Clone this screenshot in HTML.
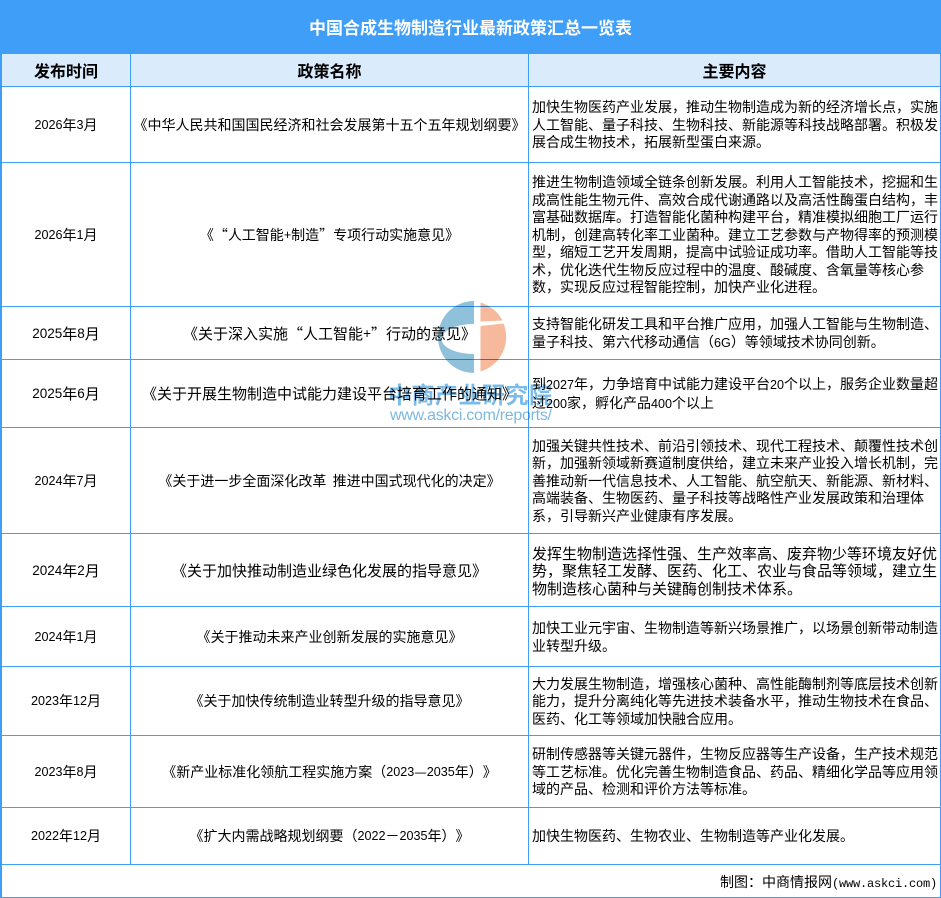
<!DOCTYPE html>
<html lang="zh-CN"><head><meta charset="utf-8"><title>中国合成生物制造行业最新政策汇总一览表</title>
<style>
html,body{margin:0;padding:0;background:#fff}
#p{position:relative;width:941px;height:898px;overflow:hidden;background:#fff;font-family:"WenQuanYi Zen Hei","Noto Sans CJK SC",sans-serif;font-size:14px;color:#000}
.t{position:absolute;left:0;top:0;width:941px;height:54px;background:#3f9ef7;color:#fff;font-size:17px;font-weight:bold;line-height:54px;text-align:center}
.hb{position:absolute;left:1px;top:54px;width:939px;height:32px;background:#daebfc}
.h{position:absolute;top:54px;height:32px;line-height:33px;font-size:16px;font-weight:bold;text-align:center}
.lh,.lv{position:absolute;background:#3f9ef7}
.lh{left:0;width:941px;height:1px}
.lv{width:1px}
.c{position:absolute;display:flex;align-items:center;justify-content:center;white-space:nowrap}
.d{left:2px;width:128px}
.n{left:131px;width:397px}
.x{left:532px;width:405px;display:flex;flex-direction:column;justify-content:center;align-items:stretch;line-height:17.5px;transform:translateY(1px)}
.x span.j{display:block;text-align:justify;text-align-last:justify;white-space:nowrap}
.x span.l{display:block;white-space:nowrap}
.b{font-size:15px}
i{font-style:normal;font-family:"Liberation Sans",sans-serif;font-size:.9em}
b{font-weight:normal;font-family:"Noto Sans CJK SC",sans-serif}
u{text-decoration:none;font-family:"Liberation Mono",monospace;font-size:12px;letter-spacing:-.2px}
.f{position:absolute;right:4px;top:873px;line-height:18px;white-space:nowrap}
svg{position:absolute;left:0;top:0;pointer-events:none;mix-blend-mode:multiply}
</style></head><body><div id="p">
<div class="t">中国合成生物制造行业最新政策汇总一览表</div>
<div class="hb"></div>
<div class="h" style="left:2px;width:128px">发布时间</div>
<div class="h" style="left:131px;width:397px">政策名称</div>
<div class="h" style="left:529px;width:411px">主要内容</div>

<div class="lv" style="left:0;top:54px;height:844px;width:2px"></div>
<div class="lv" style="left:130px;top:54px;height:810px"></div>
<div class="lv" style="left:528px;top:54px;height:810px"></div>
<div class="lv" style="left:940px;top:54px;height:844px"></div>
<div class="lh" style="top:86px"></div>
<div class="lh" style="top:162px"></div>
<div class="lh" style="top:306px"></div>
<div class="lh" style="top:359px"></div>
<div class="lh" style="top:427px"></div>
<div class="lh" style="top:533px"></div>
<div class="lh" style="top:606px"></div>
<div class="lh" style="top:666px"></div>
<div class="lh" style="top:735px"></div>
<div class="lh" style="top:807px"></div>
<div class="lh" style="top:864px"></div>
<div class="lh" style="top:897px"></div>

<div class="c d" style="top:87px;height:75px"><i>2026</i>年<i>3</i>月</div>
<div class="c n" style="top:87px;height:75px">《中华人民共和国国民经济和社会发展第十五个五年规划纲要》</div>
<div class="c x" style="top:87px;height:75px"><span class="j">加快生物医药产业发展，推动生物制造成为新的经济增长点，实施</span><span class="j">人工智能、量子科技、生物科技、新能源等科技战略部署。积极发</span><span class="l">展合成生物技术，拓展新型蛋白来源。</span></div>

<div class="c d" style="top:163px;height:143px"><i>2026</i>年<i>1</i>月</div>
<div class="c n" style="top:163px;height:143px">《<b>“</b>人工智能<i>+</i>制造<b>”</b>专项行动实施意见》</div>
<div class="c x" style="top:163px;height:143px"><span class="j">推进生物制造领域全链条创新发展。利用人工智能技术，挖掘和生</span><span class="j">成高性能生物元件、高效合成代谢通路以及高活性酶蛋白结构，丰</span><span class="j">富基础数据库。打造智能化菌种构建平台，精准模拟细胞工厂运行</span><span class="j">机制，创建高转化率工业菌种。建立工艺参数与产物得率的预测模</span><span class="j">型，缩短工艺开发周期，提高中试验证成功率。借助人工智能等技</span><span class="l">术，优化迭代生物反应过程中的温度、酸碱度、含氧量等核心参</span><span class="l">数，实现反应过程智能控制，加快产业化进程。</span></div>

<div class="c d b" style="top:307px;height:52px"><i>2025</i>年<i>8</i>月</div>
<div class="c n b" style="top:307px;height:52px">《关于深入实施<b>“</b>人工智能<i>+</i><b>”</b>行动的意见》</div>
<div class="c x" style="top:307px;height:52px"><span class="j">支持智能化研发工具和平台推广应用，加强人工智能与生物制造、</span><span class="l">量子科技、第六代移动通信（<i>6G</i>）等领域技术协同创新。</span></div>

<div class="c d b" style="top:360px;height:67px"><i>2025</i>年<i>6</i>月</div>
<div class="c n b" style="top:360px;height:67px">《关于开展生物制造中试能力建设平台培育工作的通知》</div>
<div class="c x" style="top:360px;height:67px"><span class="j">到<i>2027</i>年，力争培育中试能力建设平台<i>20</i>个以上，服务企业数量超</span><span class="l">过<i>200</i>家，孵化产品<i>400</i>个以上</span></div>

<div class="c d" style="top:428px;height:105px"><i>2024</i>年<i>7</i>月</div>
<div class="c n" style="top:428px;height:105px">《关于进一步全面深化改革&nbsp;&nbsp;推进中国式现代化的决定》</div>
<div class="c x" style="top:428px;height:105px"><span class="j">加强关键共性技术、前沿引领技术、现代工程技术、颠覆性技术创</span><span class="j">新，加强新领域新赛道制度供给，建立未来产业投入增长机制，完</span><span class="j">善推动新一代信息技术、人工智能、航空航天、新能源、新材料、</span><span class="l">高端装备、生物医药、量子科技等战略性产业发展政策和治理体</span><span class="l">系，引导新兴产业健康有序发展。</span></div>

<div class="c d b" style="top:534px;height:72px"><i>2024</i>年<i>2</i>月</div>
<div class="c n b" style="top:534px;height:72px">《关于加快推动制造业绿色化发展的指导意见》</div>
<div class="c x b" style="top:534px;height:72px"><span class="j">发挥生物制造选择性强、生产效率高、废弃物少等环境友好优</span><span class="j">势，聚焦轻工发酵、医药、化工、农业与食品等领域，建立生</span><span class="l">物制造核心菌种与关键酶创制技术体系。</span></div>

<div class="c d" style="top:607px;height:59px"><i>2024</i>年<i>1</i>月</div>
<div class="c n" style="top:607px;height:59px">《关于推动未来产业创新发展的实施意见》</div>
<div class="c x" style="top:607px;height:59px"><span class="j">加快工业元宇宙、生物制造等新兴场景推广，以场景创新带动制造</span><span class="l">业转型升级。</span></div>

<div class="c d" style="top:667px;height:68px"><i>2023</i>年<i>12</i>月</div>
<div class="c n" style="top:667px;height:68px">《关于加快传统制造业转型升级的指导意见》</div>
<div class="c x" style="top:667px;height:68px"><span class="j">大力发展生物制造，增强核心菌种、高性能酶制剂等底层技术创新</span><span class="j">能力，提升分离纯化等先进技术装备水平，推动生物技术在食品、</span><span class="l">医药、化工等领域加快融合应用。</span></div>

<div class="c d" style="top:736px;height:71px"><i>2023</i>年<i>8</i>月</div>
<div class="c n" style="top:736px;height:71px">《新产业标准化领航工程实施方案<b>（</b><i>2023</i><b>—</b><i>2035</i>年<b>）</b>》</div>
<div class="c x" style="top:736px;height:71px"><span class="j">研制传感器等关键元器件，生物反应器等生产设备，生产技术规范</span><span class="j">等工艺标准。优化完善生物制造食品、药品、精细化学品等应用领</span><span class="l">域的产品、检测和评价方法等标准。</span></div>

<div class="c d" style="top:808px;height:56px"><i>2022</i>年<i>12</i>月</div>
<div class="c n" style="top:808px;height:56px">《扩大内需战略规划纲要<b>（</b><i>2022</i><b>－</b><i>2035</i>年<b>）</b>》</div>
<div class="c x" style="top:808px;height:56px"><span class="l">加快生物医药、生物农业、生物制造等产业化发展。</span></div>

<div class="f">制图：中商情报网<u>(www.askci.com)</u></div>

<svg width="941" height="898" viewBox="0 0 941 898">
<path d="M474 301A36 36 0 0 0 474 373L474 354A32.5 15 0 0 1 474 324Z" fill="#8fc1da"/>
<path d="M480.5 302.5A36 36 0 0 1 502.5 320.5L480.5 321.5Z" fill="#f6b99c"/>
<path d="M480.5 326L503.5 323.5A36 36 0 0 1 480.5 371.5Z" fill="#f6b99c"/>
<text x="388" y="403" font-size="23" font-weight="bold" fill="#7dbce8" textLength="164" lengthAdjust="spacing" font-family="'Noto Sans CJK SC',sans-serif">中商产业研究院</text>
<text x="390" y="420" font-size="16" fill="#7db8de" textLength="162" lengthAdjust="spacing" font-family="'Liberation Sans',sans-serif">www.askci.com/reports/</text>
</svg>
</div></body></html>
